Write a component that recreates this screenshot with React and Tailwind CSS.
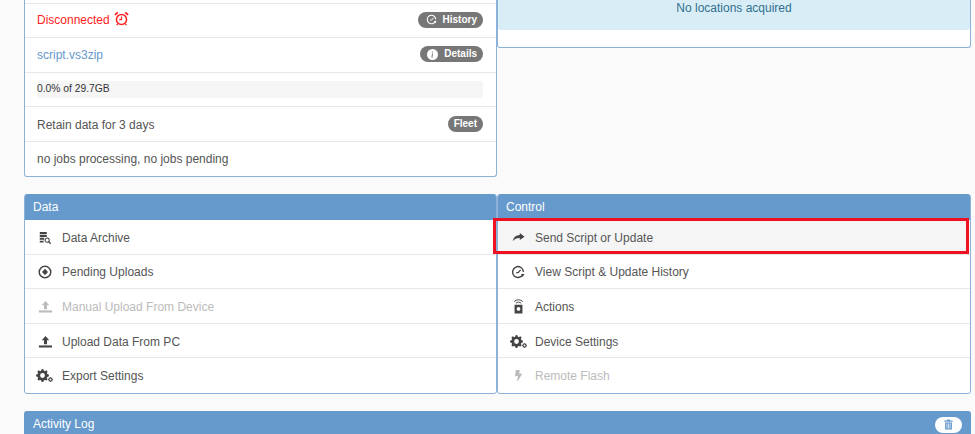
import React from 'react';
import { FaBolt } from 'react-icons/fa';
import { BsGearFill, BsInfoCircleFill } from 'react-icons/bs';

const HistoryIcon = ({ className }) => (
  <svg viewBox="0 0 16 16" className={className} fill="none" stroke="currentColor">
    <path d="M13.8 10.2A6.2 6.2 0 1 1 14.2 8" strokeWidth="1.6" />
    <path d="M6 8.8h2.2L11 5.5" strokeWidth="1.4" />
    <path d="M11.4 10.2l4 0-2 3.4z" fill="currentColor" stroke="none" />
  </svg>
);

const AlarmIcon = ({ className }) => (
  <svg viewBox="0 0 16 16" className={className} fill="none" stroke="currentColor">
    <circle cx="8" cy="9" r="5.4" strokeWidth="1.6" />
    <path d="M8 5.8V9.2H5.6" strokeWidth="1.3" />
    <path d="M1 4.2 4 1.4M15 4.2 12 1.4" strokeWidth="2" />
    <path d="M4 13.6 2.8 15M12 13.6l1.2 1.4" strokeWidth="1.3" />
  </svg>
);

const ArchiveIcon = ({ className }) => (
  <svg viewBox="0 0 16 16" className={className} fill="currentColor">
    <path d="M2 1h8v2.6H2zM2 4.6h8v2.2H2zM2 7.8h5v2.2H2zM2 11h4.4v2.2H2z" />
    <circle cx="10.5" cy="10.5" r="2.4" fill="none" stroke="currentColor" strokeWidth="1.2" />
    <path d="m12.2 12.2 2.4 2.4" stroke="currentColor" strokeWidth="1.4" />
  </svg>
);

const PendingIcon = ({ className }) => (
  <svg viewBox="0 0 16 16" className={className} fill="none" stroke="currentColor">
    <circle cx="8" cy="8" r="6.6" strokeWidth="1.7" />
    <path d="M8 4.4 11.4 8 8 11.6 4.6 8z" fill="currentColor" stroke="none" />
  </svg>
);

const UploadIcon = ({ className }) => (
  <svg viewBox="0 0 16 16" className={className} fill="currentColor">
    <path d="M8 2 12 6.6H9.6v4.4H6.4V6.6H4z" />
    <path d="M1 12.2h14v2.2H1z" />
  </svg>
);

const ShareIcon = ({ className }) => (
  <svg viewBox="0 0 16 16" className={className} fill="currentColor">
    <path d="M9.6 2.6 15.4 7 9.6 11V8.6C6.4 8.4 3.4 9.4 0.8 12.6 1.6 8.2 4.6 5.4 9.6 5z" />
  </svg>
);

const RemoteIcon = ({ className }) => (
  <svg viewBox="0 0 16 16" className={className} fill="none" stroke="currentColor">
    <path d="M3.4 2.8a6.4 6.4 0 0 1 9.2 0M5.2 4.6a3.8 3.8 0 0 1 5.6 0" strokeWidth="1" />
    <path fillRule="evenodd" clipRule="evenodd" d="M3.8 6.2h8.4v9.2H3.8zM8 8.6a2 2 0 1 0 0 4 2 2 0 0 0 0-4z" fill="currentColor" stroke="none" />
  </svg>
);

const TrashIcon = ({ className }) => (
  <svg viewBox="0 0 16 16" className={className} fill="currentColor">
    <path d="M6 0.8h4V2h4v2H2V2h4zM3 5h10v10.4H3zM5.2 6.6v7.2h1V6.6zM7.5 6.6v7.2h1V6.6zM9.8 6.6v7.2h1V6.6z" fillRule="evenodd" />
  </svg>
);

const GearsIcon = ({ className = '' }) => (
  <span className={`relative inline-block w-[17px] h-[13px] ${className}`}>
    <BsGearFill className="absolute left-0 top-0 w-[13px] h-[13px]" />
    <BsGearFill className="absolute right-0 bottom-0 w-[5px] h-[5px]" />
  </span>
);

const dataRows = [
  { label: 'Data Archive', icon: <ArchiveIcon className="w-[14px] h-[14px]" /> },
  { label: 'Pending Uploads', icon: <PendingIcon className="w-[14px] h-[14px]" /> },
  { label: 'Manual Upload From Device', icon: <UploadIcon className="w-[15px] h-[15px]" />, disabled: true },
  { label: 'Upload Data From PC', icon: <UploadIcon className="w-[15px] h-[15px]" /> },
  { label: 'Export Settings', icon: <GearsIcon className="-ml-[2px]" /> },
];

const controlRows = [
  { label: 'Send Script or Update', icon: <ShareIcon className="w-[13px] h-[13px]" />, active: true },
  { label: 'View Script & Update History', icon: <HistoryIcon className="w-[14px] h-[14px]" /> },
  { label: 'Actions', icon: <RemoteIcon className="w-[15px] h-[15px]" /> },
  { label: 'Device Settings', icon: <GearsIcon /> },
  { label: 'Remote Flash', icon: <FaBolt className="w-[11px] h-[11px]" />, disabled: true },
];

function Badge({ icon, children }) {
  return (
    <span className="flex items-center gap-[6px] h-[16px] -mt-[2px] mr-[1px] px-[6px] rounded-full bg-[#777777] text-white text-[10px] font-bold">
      {icon}
      {children}
    </span>
  );
}

function InfoRow({ children }) {
  return (
    <div className="flex items-center justify-between h-[34.4px] px-[12px] border-b border-[#e8e8e8] last:border-b-0">
      {children}
    </div>
  );
}

function MenuPanel({ title, rows }) {
  return (
    <div className="bg-white border border-[#8db2da] rounded-[3px]">
      <div className="h-[26px] -mt-px flex items-center px-[8px] bg-[#6699cc] text-white rounded-t-[3px]">{title}</div>
      {rows.map((r) => (
        <div
          key={r.label}
          className={`relative flex items-center gap-[7px] h-[34.6px] pl-[10px] pt-[2px] last:pt-0 border-b border-[#e8e8e8] last:border-b-0 ${r.active ? 'bg-[#f5f5f5]' : ''} ${r.disabled ? 'text-[#bbbbbb]' : 'text-[#555555]'}`}
        >
          <span className={`flex items-center justify-center w-[20px] ${r.disabled ? 'text-[#bbbbbb]' : 'text-[#444444]'}`}>{r.icon}</span>
          {r.label}
          {r.active && <div className="absolute -left-[5px] right-[1px] -top-[2px] h-[36px] border-[3px] border-[#ee1122]" />}
        </div>
      ))}
    </div>
  );
}

export default function App() {
  return (
    <div className="h-[434px] overflow-hidden bg-[#fafafa] font-['Liberation_Sans',Arial,sans-serif] text-[12px] leading-none pl-[24px] pr-[4px]">
      <div className="grid grid-cols-[473px_474px] items-start">
        <div className="bg-white border border-t-0 border-[#8db2da] rounded-b-[3px] text-[#555555]">
          <div className="h-[4px] border-b border-[#e8e8e8]" />
          <InfoRow>
            <span className="flex items-center gap-[4px] -mt-[2px] text-[#ff2222]">
              Disconnected
              <AlarmIcon className="w-[15px] h-[15px] -mt-[2px]" />
            </span>
            <Badge icon={<HistoryIcon className="w-[11px] h-[11px] ml-[2px]" />}>History</Badge>
          </InfoRow>
          <InfoRow>
            <span className="text-[#6699cc]">script.vs3zip</span>
            <Badge icon={<BsInfoCircleFill className="w-[11px] h-[11px] ml-[1px]" />}>Details</Badge>
          </InfoRow>
          <InfoRow>
            <div className="flex-1 h-[17px] mr-[1px] flex items-center bg-[#f5f5f5] rounded-[3px] text-[#333333] text-[10.3px]">0.0% of 29.7GB</div>
          </InfoRow>
          <InfoRow>
            <span className="pt-[3px]">Retain data for 3 days</span>
            <span className="pt-[2px]">
              <Badge>Fleet</Badge>
            </span>
          </InfoRow>
          <InfoRow>no jobs processing, no jobs pending</InfoRow>
        </div>

        <div className="bg-white border border-t-0 border-[#8db2da] rounded-b-[3px] h-[48px]">
          <div className="h-[30px] pt-[2px] bg-[#d9edf7] text-[#31708f] text-center rounded-b-[3px]">No locations acquired</div>
        </div>
      </div>

      <div className="grid grid-cols-[473px_474px] mt-[17px] items-start">
        <MenuPanel title="Data" rows={dataRows} />
        <MenuPanel title="Control" rows={controlRows} />
      </div>

      <div className="mt-[17px] w-[947px] h-[40px] bg-[#6699cc] rounded-t-[3px] text-white flex items-start justify-between pt-[7px] pl-[9px] pr-[9px]">
        Activity Log
        <span className="flex items-center justify-center w-[27px] h-[16px] -mt-[1px] rounded-full bg-white text-[#6699cc]">
          <TrashIcon className="w-[11px] h-[11px]" />
        </span>
      </div>
    </div>
  );
}
